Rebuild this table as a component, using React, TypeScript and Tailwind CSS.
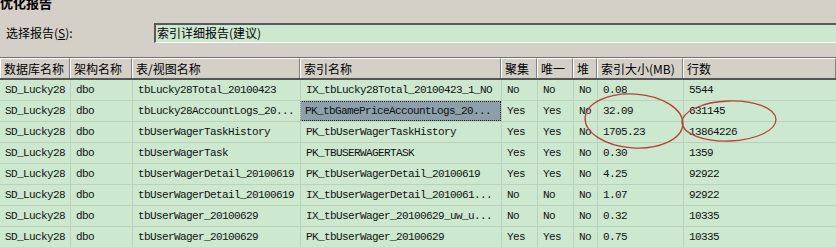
import React from "react";

const cols = ["数据库名称", "架构名称", "表/视图名称", "索引名称", "聚集", "唯一", "堆", "索引大小(MB)", "行数"];

const rows: string[][] = [
  ["SD_Lucky28", "dbo", "tbLucky28Total_20100423", "IX_tbLucky28Total_20100423_1_NO", "No", "No", "No", "0.08", "5544"],
  ["SD_Lucky28", "dbo", "tbLucky28AccountLogs_20...", "PK_tbGamePriceAccountLogs_20...", "Yes", "Yes", "No", "32.09", "631145"],
  ["SD_Lucky28", "dbo", "tbUserWagerTaskHistory", "PK_tbUserWagerTaskHistory", "Yes", "Yes", "No", "1705.23", "13864226"],
  ["SD_Lucky28", "dbo", "tbUserWagerTask", "PK_TBUSERWAGERTASK", "Yes", "Yes", "No", "0.30", "1359"],
  ["SD_Lucky28", "dbo", "tbUserWagerDetail_20100619", "PK_tbUserWagerDetail_20100619", "Yes", "Yes", "No", "4.25", "92922"],
  ["SD_Lucky28", "dbo", "tbUserWagerDetail_20100619", "IX_tbUserWagerDetail_2010061...", "No", "No", "No", "1.07", "92922"],
  ["SD_Lucky28", "dbo", "tbUserWager_20100629", "IX_tbUserWager_20100629_uw_u...", "No", "No", "No", "0.32", "10335"],
  ["SD_Lucky28", "dbo", "tbUserWager_20100629", "PK_tbUserWager_20100629", "Yes", "Yes", "No", "0.75", "10335"],
];

const cjk = { fontFamily: '"Noto Sans CJK SC", "Noto Sans", sans-serif' };
const mono = { fontFamily: '"Liberation Mono", "DejaVu Sans Mono", "Noto Sans CJK SC", monospace' };

export default function App() {
  return (
    <div className="relative w-[836px] h-[247px] overflow-hidden bg-[#d4d0c8] text-black" style={cjk}>
      <div className="h-[16px] -mt-[5px] text-[13px] leading-[16px] font-bold">优化报告</div>

      <div className="mt-[12px] flex h-[20px] items-center">
        <div className="w-[154px] pl-[6px] text-[12px] leading-[20px]">
          选择报告(<span className="underline">S</span>):
        </div>
        <div className="flex-1 h-[20px] border-t-2 border-l-2 border-t-[#5a5a5a] border-l-[#5a5a5a] border-b border-b-white bg-[#cce8cf] pl-[1px] text-[12px] leading-[16px]">
          索引详细报告(建议)
        </div>
      </div>

      <div className="mt-[14px] grid grid-cols-[70px_62px_168px_201px_36px_36px_24px_86px_153px] h-[23px] border-t border-t-[#707070] border-b-2 border-b-[#555555]">
        {cols.map((c, i) => (
          <div
            key={i}
            className="border-l border-l-white border-t border-t-white border-r border-r-[#808080] pl-[3px] text-[12px] leading-[19px] whitespace-nowrap overflow-hidden"
          >
            {c}
          </div>
        ))}
      </div>

      <div className="bg-[#cce8cf]">
        {rows.map((r, ri) => (
          <div
            key={ri}
            className="grid grid-cols-[70px_62px_168px_201px_36px_36px_24px_86px_153px] h-[21px] border-b border-b-[#bcd0be]"
          >
            {r.map((v, ci) => {
              const sel = ri === 1 && ci === 3;
              return (
                <div
                  key={ci}
                  className={
                    (ci > 0 ? "border-l border-l-[#bcd0be] " : "") +
                    (sel
                      ? "bg-[#8c9faa] border border-dotted border-[#222] pl-[4px] leading-[18px] "
                      : "pl-[5px] leading-[20px] ") +
                    "text-[11px] tracking-[-0.6px] whitespace-nowrap overflow-hidden text-[#111]"
                  }
                  style={mono}
                >
                  {v}
                </div>
              );
            })}
          </div>
        ))}
      </div>

      <svg className="absolute left-0 top-0 pointer-events-none" width="836" height="247">
        <ellipse cx="634" cy="121" rx="49" ry="27" fill="none" stroke="#b8403a" strokeWidth="1.3" transform="rotate(4 634 121)" />
        <ellipse cx="729" cy="121" rx="47" ry="20" fill="none" stroke="#b8403a" strokeWidth="1.3" transform="rotate(-2 729 121)" />
      </svg>
    </div>
  );
}
